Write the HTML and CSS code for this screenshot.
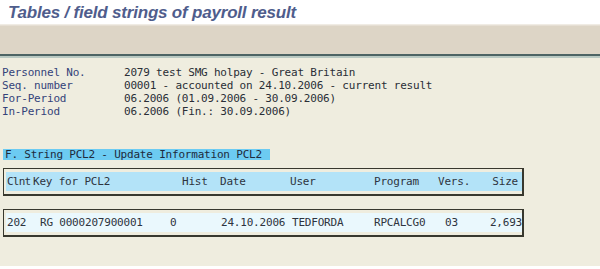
FILE: index.html
```html
<!DOCTYPE html>
<html lang="en">
<head>
	<meta charset="UTF-8">
	<title>Tables / field strings of payroll result</title>
	<link rel="stylesheet" href="styles.css">
</head>
<body>
	<h1 class="title">Tables / field strings of payroll result</h1>
	<div class="toolbar"></div>
	<div class="content">
		<div class="info">
			<div class="info-row"><span class="label">Personnel No.</span><span class="value">2079 test SMG holpay - Great Britain</span></div>
			<div class="info-row"><span class="label">Seq. number</span><span class="value">00001 - accounted on 24.10.2006 - current result</span></div>
			<div class="info-row"><span class="label">For-Period</span><span class="value">06.2006 (01.09.2006 - 30.09.2006)</span></div>
			<div class="info-row"><span class="label">In-Period</span><span class="value">06.2006 (Fin.: 30.09.2006)</span></div>
		</div>
		<div class="section-title">F. String PCL2 - Update Information PCL2</div>
		<div class="box">
			<div class="row head">
				<span class="c-clnt">Clnt</span>
				<span class="c-key">Key for PCL2</span>
				<span class="c-hist">Hist</span>
				<span class="c-date">Date</span>
				<span class="c-user">User</span>
				<span class="c-prog">Program</span>
				<span class="c-vers">Vers.</span>
				<span class="c-size">Size</span>
			</div>
		</div>
		<div class="box">
			<div class="row data">
				<span class="c-clnt">202</span>
				<span class="c-key">RG 0000207900001</span>
				<span class="c-hist">0</span>
				<span class="c-date">24.10.2006</span>
				<span class="c-user">TEDFORDA</span>
				<span class="c-prog">RPCALCG0</span>
				<span class="c-vers">03</span>
				<span class="c-size">2,693</span>
			</div>
		</div>
	</div>
</body>
</html>
```
FILE: styles.css
```css
*{
	margin: 0;
	padding: 0;
	box-sizing: border-box;
}
body{
	width: 600px;
	height: 269px;
	background: #fff;
	overflow: hidden;
	font-family: "DejaVu Sans Mono", "Liberation Mono", monospace;
	font-size: 11px;
	letter-spacing: -0.2px;
	color: #2e3440;
}
.title{
	height: 25px;
	padding: 3px 0 0 8px;
	font-family: "Liberation Sans", Arial, sans-serif;
	font-size: 17px;
	letter-spacing: -0.2px;
	font-weight: bold;
	font-style: italic;
	color: #4f5d8c;
	line-height: 20px;
	border-bottom: 1px solid #f0ece4;
}
.toolbar{
	height: 31px;
	background: #ddd5c6;
	border-top: 1px solid #e6dfd4;
	border-bottom: 2px solid #4d6464;
	box-shadow: 0 2px 0 #b9c9c2;
}
.content{
	height: 211px;
	margin-top: 2px;
	background: #efeddf;
	padding: 8px 0 0 0;
	border-bottom: 3px solid #fff;
}
.info-row{
	display: flex;
	height: 13px;
	line-height: 13px;
	padding-left: 2px;
	white-space: nowrap;
}
.label{
	width: 122px;
	color: #34437a;
}
.value{
	color: #2a2e36;
}
.section-title{
	display: inline-block;
	margin: 31px 0 0 3px;
	padding: 0 2px;
	height: 11px;
	line-height: 11px;
	width: 267px;
	white-space: nowrap;
	background: #6ccbf2;
	color: #1e2a3c;
}
.box{
	width: 521px;
	height: 28px;
	margin-left: 3px;
	padding: 3px 0 3px 2px;
	border: 1px solid #38382e;
	border-right-width: 2px;
	border-bottom-width: 2px;
}
.box + .box{
	margin-top: 13px;
}
.section-title + .box{
	margin-top: 7px;
}
.row{
	display: flex;
	height: 19px;
	line-height: 19px;
	padding-left: 1px;
	white-space: nowrap;
}
.head{
	background: #b3e3f8;
}
.data{
	background: #eaf8fd;
}
.c-size{ margin-left: auto; text-align: right; }

.head .c-clnt{ width: 26px; letter-spacing: -0.8px; }
.head .c-key{ width: 149px; }
.head .c-hist{ width: 38px; }
.head .c-date{ width: 70px; }
.head .c-user{ width: 84px; }
.head .c-prog{ width: 64px; }
.head .c-size{ margin-right: 4px; }

.data .c-clnt{ width: 33px; }
.data .c-key{ width: 130px; }
.data .c-hist{ width: 51px; }
.data .c-date{ width: 71px; }
.data .c-user{ width: 82px; }
.data .c-prog{ width: 71px; }
.data .c-size{ margin-right: 0; }
```
